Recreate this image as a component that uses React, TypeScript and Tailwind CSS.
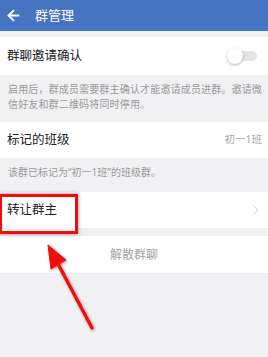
import { ArrowLeft, ChevronRight } from "lucide-react";

const font = { fontFamily: '"Noto Sans", "Noto Sans CJK SC", sans-serif' };

function Toggle() {
  return (
    <div className="relative w-[31px] h-[16px] flex items-center">
      <div className="ml-[2px] w-[28px] h-[10px] rounded-full bg-[#e4e4e6]" />
      <div className="absolute left-0 top-0 w-[16px] h-[16px] rounded-full bg-white shadow-[0_1px_3px_rgba(0,0,0,0.3)]" />
    </div>
  );
}

export default function App() {
  return (
    <div className="relative w-[268px] h-[357px] overflow-hidden bg-[#f1f1f3]" style={font}>
      <header className="h-[31px] bg-[#4673c2] flex items-center pl-[5px] gap-[13px] text-white">
        <ArrowLeft size={17} strokeWidth={2.6} />
        <span className="text-[13px] leading-none">群管理</span>
      </header>

      <div className="mt-[6px] h-[38px] bg-white flex items-center justify-between pl-[7px] pr-[10px]">
        <span className="text-[12.5px] text-[#222]">群聊邀请确认</span>
        <Toggle />
      </div>
      <p className="pl-[8px] pr-[4px] pt-[7px] pb-[10px] text-[10px] leading-[15px] tracking-[0.16px] text-[#9a9a9a]">
        启用后，群成员需要群主确认才能邀请成员进群。邀请微信好友和群二维码将同时停用。
      </p>

      <div className="h-[36px] bg-white flex items-center justify-between pl-[7px] pr-[6px]">
        <span className="text-[12.5px] text-[#222]">标记的班级</span>
        <span className="text-[10.5px] text-[#a8a8a8]">初一1班</span>
      </div>
      <p className="pl-[8px] pt-[7px] pb-[12px] text-[10px] leading-[15px] text-[#9a9a9a]">
        该群已标记为“初一1班”的班级群。
      </p>

      <div className="h-[36px] bg-white flex items-center justify-between pl-[7px] pr-[4px]">
        <span className="text-[12.5px] text-[#222]">转让群主</span>
        <ChevronRight size={16} strokeWidth={1} className="text-[#b8b8b8]" />
      </div>

      <div className="mt-[8px] h-[37px] bg-white flex items-center justify-center">
        <span className="text-[12px] text-[#a2a2a2]">解散群聊</span>
      </div>

      {/* annotation: red box */}
      <div className="absolute left-[-1px] top-[194px] w-[79px] h-[40px] border-[3px] border-[#f20d0d] shadow-[0_0_4px_rgba(0,0,0,0.45)]" />

      {/* annotation: arrow */}
      <svg className="absolute left-0 top-0 pointer-events-none" width="268" height="357" viewBox="0 0 268 357">
        <defs>
          <filter id="sh" x="-50%" y="-50%" width="200%" height="200%">
            <feDropShadow dx="1" dy="1" stdDeviation="1.5" floodColor="#000" floodOpacity="0.4" />
          </filter>
        </defs>
        <g filter="url(#sh)" fill="#f20d0d" stroke="#f20d0d">
          <line x1="57" y1="262" x2="92" y2="328" strokeWidth="3.4" strokeLinecap="round" />
          <polygon points="48,245 66,260 51,269" strokeWidth="1" strokeLinejoin="round" />
        </g>
      </svg>
    </div>
  );
}
